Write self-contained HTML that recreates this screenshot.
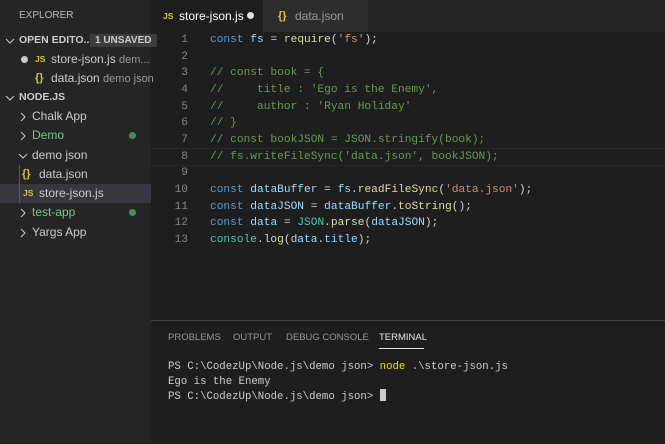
<!DOCTYPE html><html><head><style>
body{margin:0;width:665px;height:443px;overflow:hidden;background:#1e1e1e;font-family:"Liberation Sans",sans-serif;position:relative}
.sb{position:absolute;left:0;top:0;width:151px;height:443px;background:#252526;color:#ccc;font-size:12px}
.r{position:absolute;left:0;width:151px;height:19px;line-height:19px;white-space:nowrap}
.h{font-weight:bold;font-size:10.5px}
.js{color:#cbcb41;font-size:8.5px;font-weight:bold}
.br{color:#cbcb41;font-weight:bold;font-size:11px}
.g{color:#73c991}
.dot{position:absolute;left:129px;top:6px;width:7px;height:7px;border-radius:50%;background:#4b8b5b}
.tabs{position:absolute;left:151px;top:0;width:514px;height:32px;background:#252526}
.tab{position:absolute;top:0;height:32px;line-height:32px;font-size:12px}
.code{position:absolute;left:151px;top:32px;font-family:"Liberation Mono",monospace;font-size:11.2px;color:#d4d4d4}
.l{height:16.67px;line-height:16.67px;white-space:pre;position:relative}
.n{position:absolute;left:0;width:37px;text-align:right;color:#858585}
.t{position:absolute;left:59px}
.k{color:#569cd6}.v{color:#9cdcfe}.s{color:#ce9178}.c{color:#6a9955}.f{color:#dcdcaa}.y{color:#4ec9b0}
.panel{position:absolute;left:151px;top:320px;width:514px;height:123px;border-top:1px solid #414141;background:#1e1e1e}
.pt{position:absolute;top:11px;font-size:9.5px;color:#969696}
.term{position:absolute;left:17px;top:39px;font-family:"Liberation Mono",monospace;font-size:10.7px;color:#ccc;line-height:14.5px;white-space:pre}
svg.ch{position:absolute;top:5px}
</style></head><body>
<div class="sb">
<div class="r" style="top:6px;left:19px;font-size:10px;color:#bbb">EXPLORER</div>
<div class="r h" style="top:31px"><svg class="ch" style="left:5px" width="10" height="10"><path d="M1 3 L5 7 L9 3" stroke="#ccc" fill="none"/></svg><span style="position:absolute;left:19px">OPEN EDITO...</span><span style="position:absolute;left:90px;top:3px;height:13px;line-height:13px;padding:0 5px;background:#3c3c3c;font-size:10px">1 UNSAVED</span></div>
<div class="r" style="top:50px"><span style="position:absolute;left:21px;top:6px;width:7px;height:7px;border-radius:50%;background:#ccc"></span><span class="js" style="position:absolute;left:35px">JS</span><span style="position:absolute;left:51px">store-json.js <span style="color:#999;font-size:11px">dem...</span></span></div>
<div class="r" style="top:69px"><span class="br" style="position:absolute;left:35px">{}</span><span style="position:absolute;left:51px">data.json <span style="color:#999;font-size:11px">demo json</span></span></div>
<div class="r h" style="top:88px"><svg class="ch" style="left:5px" width="10" height="10"><path d="M1 3 L5 7 L9 3" stroke="#ccc" fill="none"/></svg><span style="position:absolute;left:19px">NODE.JS</span></div>
<div class="r" style="top:107px"><svg class="ch" style="left:18px" width="10" height="10"><path d="M3 1 L7 5 L3 9" stroke="#ccc" fill="none"/></svg><span style="position:absolute;left:32px">Chalk App</span></div>
<div class="r g" style="top:126px"><svg class="ch" style="left:18px" width="10" height="10"><path d="M3 1 L7 5 L3 9" stroke="#ccc" fill="none"/></svg><span style="position:absolute;left:32px">Demo</span><span class="dot"></span></div>
<div class="r" style="top:146px"><svg class="ch" style="left:18px" width="10" height="10"><path d="M1 3 L5 7 L9 3" stroke="#ccc" fill="none"/></svg><span style="position:absolute;left:32px">demo json</span></div>
<div class="r" style="top:165px"><span class="br" style="position:absolute;left:22px">{}</span><span style="position:absolute;left:39px">data.json</span></div>
<div class="r" style="top:184px;background:#37373d"><span class="js" style="position:absolute;left:23px">JS</span><span style="position:absolute;left:39px">store-json.js</span></div>
<div style="position:absolute;left:19px;top:165px;width:1px;height:38px;background:#585858"></div>
<div class="r g" style="top:203px"><svg class="ch" style="left:18px" width="10" height="10"><path d="M3 1 L7 5 L3 9" stroke="#ccc" fill="none"/></svg><span style="position:absolute;left:32px">test-app</span><span class="dot"></span></div>
<div class="r" style="top:223px"><svg class="ch" style="left:18px" width="10" height="10"><path d="M3 1 L7 5 L3 9" stroke="#ccc" fill="none"/></svg><span style="position:absolute;left:32px">Yargs App</span></div>
</div>
<div class="tabs">
<div class="tab" style="left:0;width:112px;background:#1e1e1e;color:#fff"><span class="js" style="position:absolute;left:12px">JS</span><span style="position:absolute;left:28px">store-json.js</span><span style="position:absolute;left:96px;top:12px;width:7px;height:7px;border-radius:50%;background:#ddd"></span></div>
<div class="tab" style="left:112px;width:105px;background:#2d2d2d;color:#999"><span class="br" style="position:absolute;left:15px">{}</span><span style="position:absolute;left:32px">data.json</span></div>
</div>
<div class="code">
<div class="l"><span class="n">1</span><span class="t"><span class="k">const</span> <span class="v">fs</span> = <span class="f">require</span>(<span class="s">'fs'</span>);</span></div>
<div class="l"><span class="n">2</span></div>
<div class="l c"><span class="n">3</span><span class="t">// const book = {</span></div>
<div class="l c"><span class="n">4</span><span class="t">//     title : 'Ego is the Enemy',</span></div>
<div class="l c"><span class="n">5</span><span class="t">//     author : 'Ryan Holiday'</span></div>
<div class="l c"><span class="n">6</span><span class="t">// }</span></div>
<div class="l c"><span class="n">7</span><span class="t">// const bookJSON = JSON.stringify(book);</span></div>
<div class="l c" style="outline:1px solid #282828;width:514px"><span class="n">8</span><span class="t">// fs.writeFileSync('data.json', bookJSON);</span></div>
<div class="l"><span class="n">9</span></div>
<div class="l"><span class="n">10</span><span class="t"><span class="k">const</span> <span class="v">dataBuffer</span> = <span class="v">fs</span>.<span class="f">readFileSync</span>(<span class="s">'data.json'</span>);</span></div>
<div class="l"><span class="n">11</span><span class="t"><span class="k">const</span> <span class="v">dataJSON</span> = <span class="v">dataBuffer</span>.<span class="f">toString</span>();</span></div>
<div class="l"><span class="n">12</span><span class="t"><span class="k">const</span> <span class="v">data</span> = <span class="y">JSON</span>.<span class="f">parse</span>(<span class="v">dataJSON</span>);</span></div>
<div class="l"><span class="n">13</span><span class="t"><span class="y">console</span>.<span class="f">log</span>(<span class="v">data</span>.<span class="v">title</span>);</span></div>
</div>
<div class="panel">
<span class="pt" style="left:17px">PROBLEMS</span><span class="pt" style="left:82px">OUTPUT</span><span class="pt" style="left:135px">DEBUG CONSOLE</span><span class="pt" style="left:228px;color:#e7e7e7">TERMINAL</span>
<div style="position:absolute;left:228px;top:27px;width:45px;height:1px;background:#e7e7e7"></div>
<div class="term">PS C:\CodezUp\Node.js\demo json&gt; <span style="color:#e5e510">node</span> .\store-json.js
Ego is the Enemy
PS C:\CodezUp\Node.js\demo json&gt; <span style="display:inline-block;width:6px;height:12px;background:#ccc;vertical-align:-2px"></span></div>
</div>
</body></html>
